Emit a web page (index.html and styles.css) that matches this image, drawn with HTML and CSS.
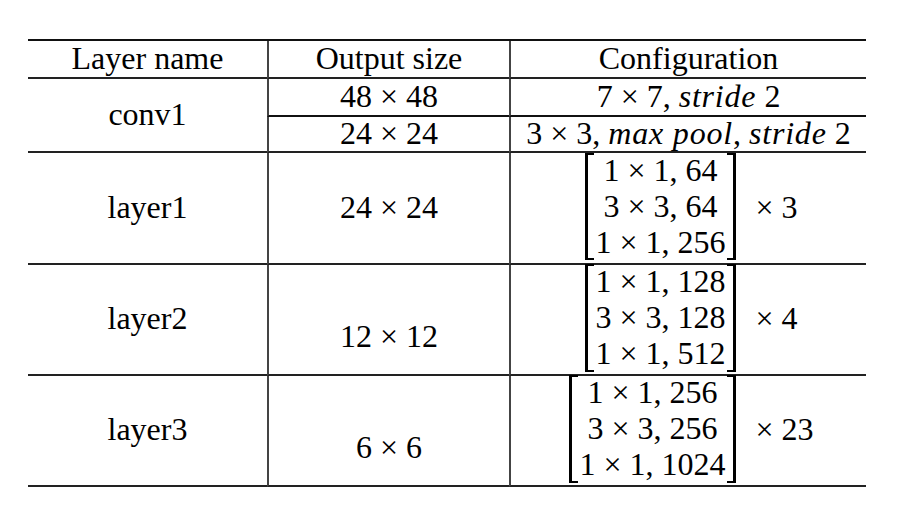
FILE: index.html
```html
<!DOCTYPE html>
<html lang="en">

<head>
    <meta charset="UTF-8">
    <meta name="viewport" content="width=device-width, initial-scale=1.0">
    <title>Network architecture</title>
    <link rel="stylesheet" href="styles.css">
</head>

<body>
    <div class="arch">
        <!-- header -->
        <div class="cell head">Layer name</div>
        <div class="cell head col-mid">Output size</div>
        <div class="cell head col-cfg">Configuration</div>

        <!-- conv1 -->
        <div class="cell name conv1">conv1</div>
        <div class="cell col-mid sub">48 × 48</div>
        <div class="cell col-cfg sub"><span>7 × 7, <i>stride</i> 2</span></div>
        <div class="cell col-mid sub2">24 × 24</div>
        <div class="cell col-cfg sub2"><span>3 × 3, <i>max pool</i>, <i>stride</i> 2</span></div>

        <!-- layer1 -->
        <div class="cell name">layer1</div>
        <div class="cell col-mid">24 × 24</div>
        <div class="cell col-cfg">
            <div class="block">
                <span class="brk brk-l"></span>
                <div class="matrix">
                    <span>1 × 1, 64</span>
                    <span>3 × 3, 64</span>
                    <span>1 × 1, 256</span>
                </div>
                <span class="brk brk-r"></span>
            </div>
            <span class="times">× 3</span>
        </div>

        <!-- layer2 -->
        <div class="cell name tall">layer2</div>
        <div class="cell col-mid tall low">12 × 12</div>
        <div class="cell col-cfg tall">
            <div class="block">
                <span class="brk brk-l"></span>
                <div class="matrix">
                    <span>1 × 1, 128</span>
                    <span>3 × 3, 128</span>
                    <span>1 × 1, 512</span>
                </div>
                <span class="brk brk-r"></span>
            </div>
            <span class="times">× 4</span>
        </div>

        <!-- layer3 -->
        <div class="cell name tall">layer3</div>
        <div class="cell col-mid tall low">6 × 6</div>
        <div class="cell col-cfg tall">
            <div class="block">
                <span class="brk brk-l"></span>
                <div class="matrix">
                    <span>1 × 1, 256</span>
                    <span>3 × 3, 256</span>
                    <span>1 × 1, 1024</span>
                </div>
                <span class="brk brk-r"></span>
            </div>
            <span class="times">× 23</span>
        </div>
    </div>
</body>

</html>
```

FILE: styles.css
```css
body {
    margin: 0;
    background: #fff;
    color: #000;
    font-family: 'Liberation Serif', 'DejaVu Serif', serif;
    font-size: 32px;
}

.arch {
    display: grid;
    grid-template-columns: 239px 242px 357px;
    grid-template-rows: 38px 38px 36px 112px 111px 111px;
    width: 838px;
    margin: 39px 0 0 28px;
    border-top: 2px solid #111;
}

.cell {
    box-sizing: border-box;
    display: flex;
    align-items: center;
    justify-content: center;
    padding-bottom: 3px;
    border-bottom: 2px solid #222;
    line-height: 36px;
    white-space: nowrap;
}

.col-mid,
.col-cfg {
    border-left: 2px solid #444;
}

.conv1 {
    grid-row: span 2;
}

.sub {
    border-bottom-color: #111;
}

.low {
    padding-top: 32px;
    padding-bottom: 0;
}

i {
    font-style: italic;
    letter-spacing: 0.8px;
}

.block {
    display: flex;
    align-items: stretch;
    height: 107px;
    margin-left: 6px;
}

.tall .block {
    height: 108px;
}

.matrix {
    display: flex;
    flex-direction: column;
    justify-content: center;
    align-items: center;
    padding: 0 1px 2px;
}

.brk {
    width: 6px;
    border-top: 2px solid #000;
    border-bottom: 2px solid #000;
}

.brk-l {
    border-left: 3px solid #000;
}

.brk-r {
    border-right: 3px solid #000;
}

.times {
    margin-left: 20px;
}
```
